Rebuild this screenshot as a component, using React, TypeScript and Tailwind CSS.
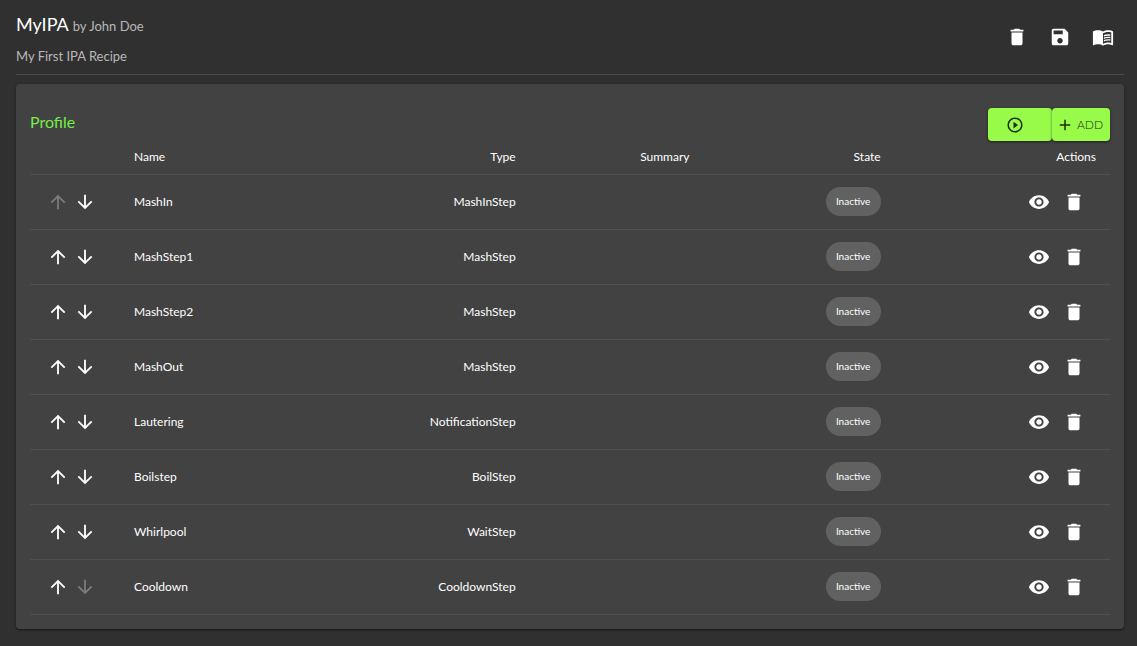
import { MdAdd, MdArrowDownward, MdArrowUpward, MdDelete, MdMenuBook, MdPlayCircleOutline, MdSave, MdVisibility } from "react-icons/md";

const steps = [
  { name: "MashIn", type: "MashInStep" },
  { name: "MashStep1", type: "MashStep" },
  { name: "MashStep2", type: "MashStep" },
  { name: "MashOut", type: "MashStep" },
  { name: "Lautering", type: "NotificationStep" },
  { name: "Boilstep", type: "BoilStep" },
  { name: "Whirlpool", type: "WaitStep" },
  { name: "Cooldown", type: "CooldownStep" },
];

export default function App() {
  return (
    <main className="min-h-screen bg-[#303030] pr-[13px] pb-4 pl-4 font-['Lato',sans-serif] text-white">
      <header className="flex h-[75px] items-start justify-between border-b border-[#4b4b4b]">
        <div className="pt-2">
          <h1 className="text-lg leading-8">
            MyIPA <small className="text-[13px] text-[#b8b8b8]">by John Doe</small>
          </h1>
          <p className="text-[13px] leading-7 text-[#b8b8b8]">My First IPA Recipe</p>
        </div>
        <div className="flex gap-[21px] pt-[26px] pr-[10px]">
          <button type="button" aria-label="Delete recipe"><MdDelete className="size-[22px]" /></button>
          <button type="button" aria-label="Save recipe"><MdSave className="size-[22px]" /></button>
          <button type="button" aria-label="Recipe book"><MdMenuBook className="size-[22px]" /></button>
        </div>
      </header>

      <section className="mt-[9px] rounded bg-[#424242] px-[14px] pt-6 pb-[14px] shadow-[0_1px_3px_rgba(0,0,0,0.3),0_1px_1px_rgba(0,0,0,0.3)]">
        <div className="flex items-start justify-between">
          <h2 className="text-base leading-7 text-[#76ee48]">Profile</h2>
          <div className="flex text-[#1d2f10]">
            <button type="button" aria-label="Start" className="flex h-[33px] w-16 items-center rounded bg-[#98fb4a] pl-[18px] shadow-[0_1px_3px_rgba(0,0,0,0.5)]">
              <MdPlayCircleOutline className="size-[18px]" />
            </button>
            <button type="button" className="flex h-[33px] w-[58px] items-center justify-between rounded bg-[#98fb4a] pr-[7px] pl-1 text-xs font-light shadow-[0_1px_3px_rgba(0,0,0,0.5)]">
              <MdAdd className="size-[18px]" />
              ADD
            </button>
          </div>
        </div>
        <table className="w-full table-fixed text-xs">
          <colgroup>
            <col className="w-[88px]" />
            <col className="w-[20.3%]" />
            <col className="w-[18%]" />
            <col className="w-[16.1%]" />
            <col className="w-[17.7%]" />
            <col />
          </colgroup>
          <thead>
            <tr className="h-[33px] border-b border-[#515151]">
              <th aria-label="Order" />
              <th className="px-4 text-left font-normal">Name</th>
              <th className="px-4 text-right font-normal">Type</th>
              <th className="px-4 text-right font-normal">Summary</th>
              <th className="px-4 text-right font-normal">State</th>
              <th className="px-[14px] text-right font-normal">Actions</th>
            </tr>
          </thead>
          <tbody>
            {steps.map((step, i) => (
              <tr key={step.name} className="h-[55px] border-b border-[#515151]">
                <td>
                  <div className="flex gap-[5px] pl-[17px]">
                    <button type="button" aria-label={`Move ${step.name} up`} disabled={i === 0} className="disabled:text-[#7b7b7b]">
                      <MdArrowUpward className="size-[22px]" />
                    </button>
                    <button type="button" aria-label={`Move ${step.name} down`} disabled={i === steps.length - 1} className="disabled:text-[#7b7b7b]">
                      <MdArrowDownward className="size-[22px]" />
                    </button>
                  </div>
                </td>
                <td className="px-4">{step.name}</td>
                <td className="px-4 text-right">{step.type}</td>
                <td />
                <td className="px-4">
                  <span className="ml-auto flex h-[29px] w-[55px] items-center justify-center rounded-full bg-[#616161] text-[10px]">Inactive</span>
                </td>
                <td className="pr-[25px]">
                  <div className="flex justify-end gap-[13px]">
                    <button type="button" aria-label={`View ${step.name}`}><MdVisibility className="size-[22px]" /></button>
                    <button type="button" aria-label={`Delete ${step.name}`}><MdDelete className="size-[22px]" /></button>
                  </div>
                </td>
              </tr>
            ))}
          </tbody>
        </table>
      </section>
    </main>
  );
}
